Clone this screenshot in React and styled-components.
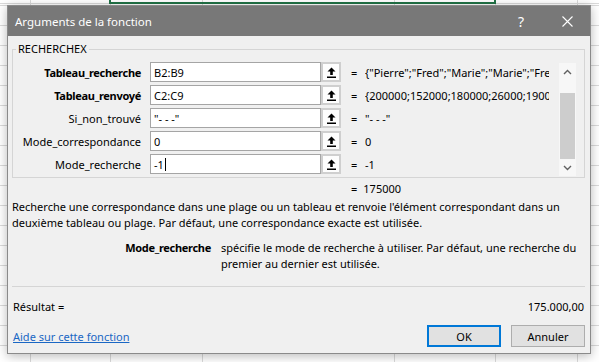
import React from "react";
import styled, { createGlobalStyle } from "styled-components";

const GlobalStyle = createGlobalStyle`
  html, body {
    margin: 0;
    padding: 0;
  }
  body {
    font-family: "Noto Sans", "Open Sans", sans-serif;
    font-size: 11px;
    color: #000;
  }
`;

const GRID = "#dadada";

const Sheet = styled.div`
  position: relative;
  width: 599px;
  height: 362px;
  overflow: hidden;
  background-color: #fff;
  background-image:
    linear-gradient(to right,
      transparent 30px, ${GRID} 30px, ${GRID} 31px, transparent 31px,
      transparent 110px, ${GRID} 110px, ${GRID} 111px, transparent 111px,
      transparent 202px, ${GRID} 202px, ${GRID} 203px, transparent 203px,
      transparent 394px, ${GRID} 394px, ${GRID} 395px, transparent 395px,
      transparent 495px, ${GRID} 495px, ${GRID} 496px, transparent 496px,
      transparent 577px, ${GRID} 577px, ${GRID} 578px, transparent 578px),
    repeating-linear-gradient(to bottom, ${GRID} 0 1px, transparent 1px 20px);
  background-position: 0 0, 0 5px;
  padding: 5px 0 0 7px;
  box-sizing: border-box;
`;

const Selection = styled.div`
  position: absolute;
  left: 109px;
  top: -4px;
  width: 387px;
  height: 8px;
  border: 2px solid #217346;
  box-sizing: border-box;
`;

const Dialog = styled.div`
  position: relative;
  width: 584px;
  height: 349px;
  box-sizing: border-box;
  background: #f0f0f0;
  border: 1px solid #8a8a8a;
  box-shadow: 0 2px 10px rgba(0, 0, 0, 0.28);
  display: flex;
  flex-direction: column;
`;

const TitleBar = styled.div`
  height: 30px;
  flex: none;
  display: flex;
  align-items: center;
  background: #787878;
  color: #fff;
  font-size: 11.5px;
  padding-left: 7px;
`;

const Title = styled.span`
  flex: 1;
`;

const CaptionButton = styled.div`
  width: 46px;
  height: 30px;
  display: flex;
  align-items: center;
  justify-content: center;
  font-size: 14px;
`;

const Body = styled.div`
  flex: 1;
  display: flex;
  flex-direction: column;
  padding: 0 5px 7px 4px;
`;

const GroupBox = styled.div`
  position: relative;
  margin-top: 13px;
  border: 1px solid #d5d5d5;
  padding: 12px 8px 0 0;
  display: flex;
  height: 115px;
`;

const GroupCaption = styled.span`
  position: absolute;
  left: 3px;
  top: -9px;
  padding: 0 2px;
  line-height: 16px;
  background: #f0f0f0;
`;

const ArgList = styled.div`
  flex: 1;
  display: grid;
  grid-template-columns: 137px 171px 20px 24px 184px;
  grid-auto-rows: 20px;
  row-gap: 3px;
  align-items: center;
`;

const Label = styled.div`
  text-align: right;
  padding-right: 9px;
  font-weight: ${(p) => (p.$required ? 700 : 400)};
  letter-spacing: ${(p) => (p.$required ? "-0.3px" : "0")};
  white-space: nowrap;
`;

const Input = styled.div`
  height: 20px;
  box-sizing: border-box;
  background: #fff;
  border: 1px solid #a5a5a5;
  padding-left: 3px;
  display: flex;
  align-items: center;
  white-space: nowrap;
`;

const Caret = styled.span`
  display: inline-block;
  width: 1px;
  height: 13px;
  margin-left: 1px;
  background: #000;
`;

const RefButton = styled.div`
  width: 20px;
  height: 20px;
  box-sizing: border-box;
  border: 2px solid #cfcfcf;
  background: #fdfdfd;
  display: flex;
  align-items: center;
  justify-content: center;
`;

const Equals = styled.div`
  padding-left: 10px;
`;

const Value = styled.div`
  overflow: hidden;
  white-space: nowrap;
`;

const ScrollBar = styled.div`
  width: 17px;
  height: 113px;
  margin-top: 1px;
  flex: none;
  display: flex;
  flex-direction: column;
  align-items: center;
  background: #f7f7f7;
`;

const ScrollArrow = styled.div`
  width: 17px;
  height: 17px;
  flex: none;
  display: flex;
  align-items: center;
  justify-content: center;
`;

const Thumb = styled.div`
  width: 15px;
  height: 66px;
  margin-top: 13px;
  background: #cdcdcd;
`;

const Spacer = styled.div`
  flex: 1;
`;

const FormulaResult = styled.div`
  display: flex;
  margin-top: 3px;
  padding-left: 339px;
  line-height: 16px;
`;

const ResultValue = styled.span`
  margin-left: 6px;
`;

const Description = styled.p`
  margin: 2px 0 0;
  line-height: 16px;
`;

const ArgHelp = styled.div`
  display: flex;
  margin-top: 9px;
  line-height: 16px;
`;

const ArgHelpName = styled.div`
  width: 199px;
  flex: none;
  text-align: right;
  font-weight: 700;
  letter-spacing: -0.3px;
`;

const ArgHelpText = styled.div`
  margin-left: 10px;
  width: 362px;
`;

const Separator = styled.div`
  margin-top: 14px;
  border-top: 1px solid #d5d5d5;
`;

const ResultRow = styled.div`
  display: flex;
  justify-content: space-between;
  margin-top: 12px;
  padding: 0 1px 0 1px;
  line-height: 16px;
`;

const Footer = styled.div`
  display: flex;
  align-items: center;
  margin-top: 10px;
  padding-left: 1px;
  gap: 10px;
`;

const HelpLink = styled.a`
  flex: 1;
  color: #1a67c4;
  text-decoration: underline;
  cursor: pointer;
`;

const Button = styled.button`
  width: 74px;
  height: 22px;
  box-sizing: border-box;
  font-family: inherit;
  font-size: 11px;
  color: #000;
  background: #e1e1e1;
  border: ${(p) => (p.$default ? "2px solid #0078d7" : "1px solid #adadad")};
  padding: 0;
`;

const RefIcon = () => (
  <svg width="9" height="11" viewBox="0 0 9 11">
    <path d="M4.5 0.5 L8.5 4.5 L5.8 4.5 L5.8 8 L3.2 8 L3.2 4.5 L0.5 4.5 Z" fill="#000" />
    <rect x="0" y="9.5" width="9" height="1.5" fill="#000" />
  </svg>
);

const Chevron = ({ down }) => (
  <svg width="9" height="6" viewBox="0 0 9 6">
    <path
      d={down ? "M1 1 L4.5 4.5 L8 1" : "M1 5 L4.5 1.5 L8 5"}
      fill="none"
      stroke="#606060"
      strokeWidth="1.4"
    />
  </svg>
);

const CloseIcon = () => (
  <svg width="11" height="11" viewBox="0 0 11 11">
    <path d="M0.5 0.5 L10.5 10.5 M10.5 0.5 L0.5 10.5" stroke="#fff" strokeWidth="1.1" />
  </svg>
);

const args = [
  { name: "Tableau_recherche", required: true, input: "B2:B9", value: '{"Pierre";"Fred";"Marie";"Marie";"Fred";"Paul";"Jean";"Luc"}' },
  { name: "Tableau_renvoyé", required: true, input: "C2:C9", value: "{200000;152000;180000;26000;190000;175000;90000;120000}" },
  { name: "Si_non_trouvé", input: '"- - -"', value: '"- - -"' },
  { name: "Mode_correspondance", input: "0", value: "0" },
  { name: "Mode_recherche", input: "-1", value: "-1", focused: true },
];

export default function App() {
  return (
    <>
      <GlobalStyle />
      <Sheet>
        <Selection />
        <Dialog>
          <TitleBar>
            <Title>Arguments de la fonction</Title>
            <CaptionButton>?</CaptionButton>
            <CaptionButton>
              <CloseIcon />
            </CaptionButton>
          </TitleBar>
          <Body>
            <GroupBox>
              <GroupCaption>RECHERCHEX</GroupCaption>
              <ArgList>
                {args.map((a) => (
                  <React.Fragment key={a.name}>
                    <Label $required={a.required}>{a.name}</Label>
                    <Input>
                      {a.input}
                      {a.focused && <Caret />}
                    </Input>
                    <RefButton>
                      <RefIcon />
                    </RefButton>
                    <Equals>=</Equals>
                    <Value>{a.value}</Value>
                  </React.Fragment>
                ))}
              </ArgList>
              <ScrollBar>
                <ScrollArrow>
                  <Chevron />
                </ScrollArrow>
                <Thumb />
                <Spacer />
                <ScrollArrow>
                  <Chevron down />
                </ScrollArrow>
              </ScrollBar>
            </GroupBox>
            <FormulaResult>
              <span>=</span>
              <ResultValue>175000</ResultValue>
            </FormulaResult>
            <Description>
              Recherche une correspondance dans une plage ou un tableau et renvoie l'élément correspondant dans un
              deuxième tableau ou plage. Par défaut, une correspondance exacte est utilisée.
            </Description>
            <ArgHelp>
              <ArgHelpName>Mode_recherche</ArgHelpName>
              <ArgHelpText>
                spécifie le mode de recherche à utiliser. Par défaut, une recherche du premier au dernier est utilisée.
              </ArgHelpText>
            </ArgHelp>
            <Separator />
            <ResultRow>
              <span>Résultat =</span>
              <span>175.000,00</span>
            </ResultRow>
            <Footer>
              <HelpLink>Aide sur cette fonction</HelpLink>
              <Button $default>OK</Button>
              <Button>Annuler</Button>
            </Footer>
          </Body>
        </Dialog>
      </Sheet>
    </>
  );
}
